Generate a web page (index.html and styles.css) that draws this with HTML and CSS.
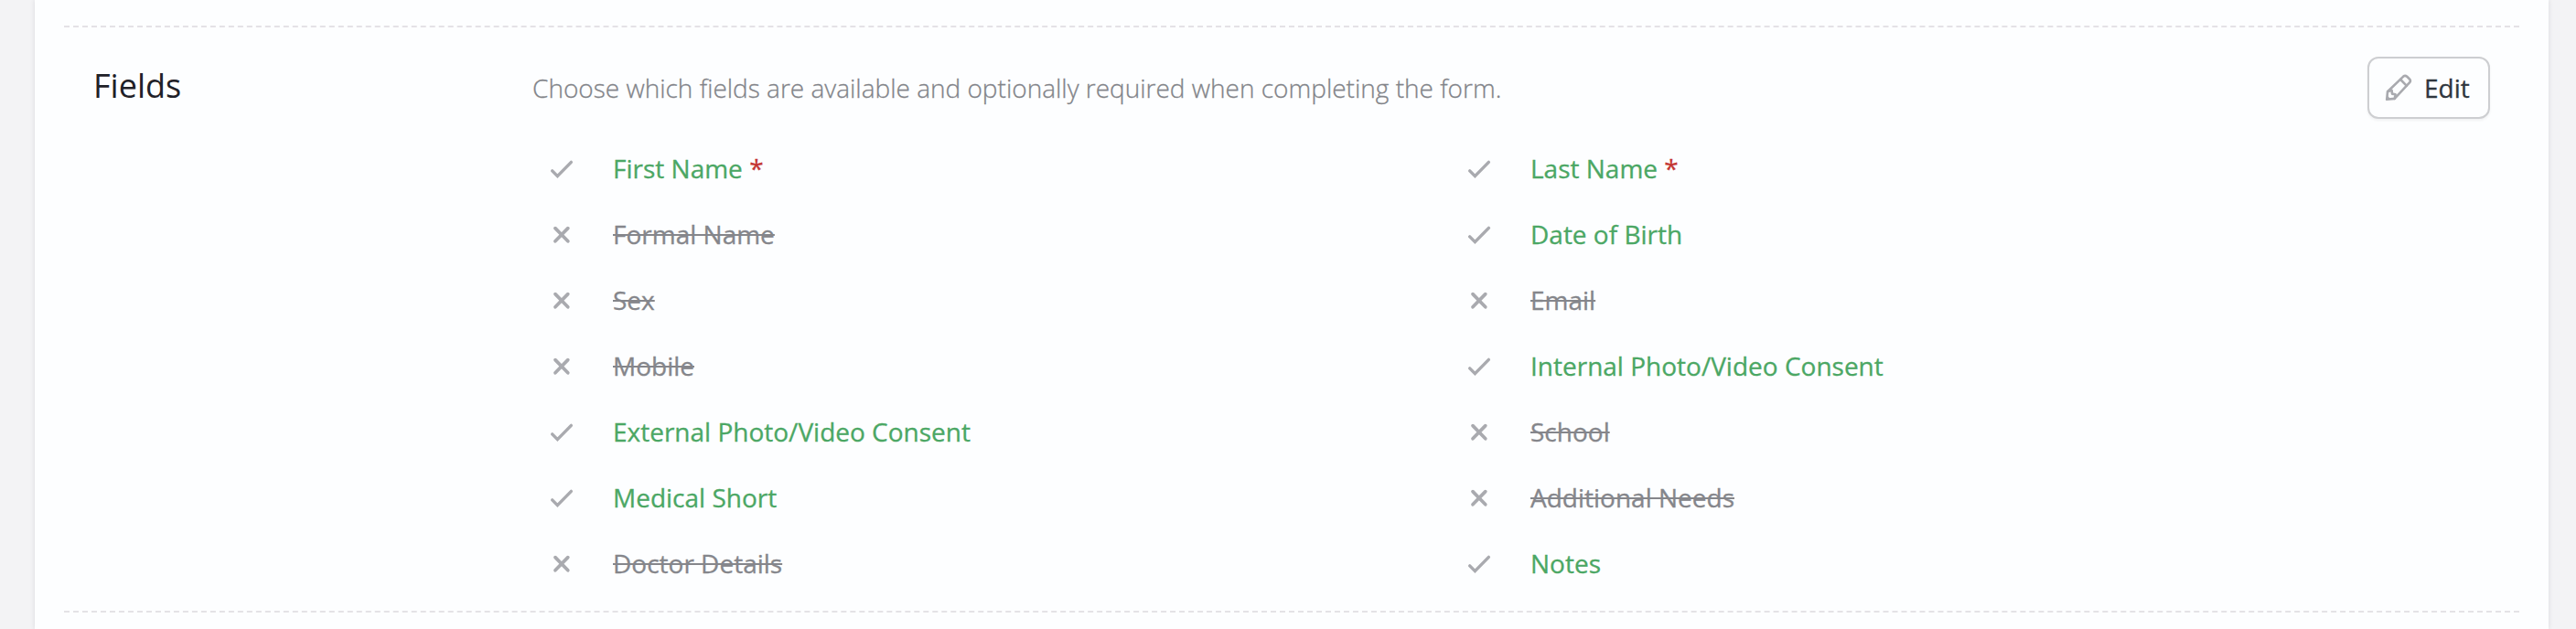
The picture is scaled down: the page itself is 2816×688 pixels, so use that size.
FILE: index.html
```html
<!DOCTYPE html>
<html lang="en">
<head>
<meta charset="utf-8">
<title>Fields</title>
<link rel="stylesheet" href="styles.css">
</head>
<body>
<svg class="sprite" aria-hidden="true">
  <symbol id="check" viewBox="0 0 28 24"><path d="M3.7 13.9 9.4 19.6 24.4 4.4" fill="none" stroke="currentColor" stroke-width="3.4" stroke-linecap="round" stroke-linejoin="miter"/></symbol>
  <symbol id="cross" viewBox="0 0 28 24"><path d="M7 4.6 20.8 18.8M20.8 4.6 7 18.8" fill="none" stroke="currentColor" stroke-width="3.7" stroke-linecap="round"/></symbol>
</svg>
<main class="card">
  <section class="section">
    <h2 class="title">Fields</h2>
    <div class="content">
      <p class="intro">Choose which fields are available and optionally required when completing the form.</p>
      <ul class="fields">
        <li class="field on"><svg class="mark"><use href="#check"/></svg><span>First Name <b class="req">*</b></span></li>
        <li class="field on"><svg class="mark"><use href="#check"/></svg><span>Last Name <b class="req">*</b></span></li>
        <li class="field off"><svg class="mark"><use href="#cross"/></svg><span>Formal Name</span></li>
        <li class="field on"><svg class="mark"><use href="#check"/></svg><span>Date of Birth</span></li>
        <li class="field off"><svg class="mark"><use href="#cross"/></svg><span>Sex</span></li>
        <li class="field off"><svg class="mark"><use href="#cross"/></svg><span>Email</span></li>
        <li class="field off"><svg class="mark"><use href="#cross"/></svg><span>Mobile</span></li>
        <li class="field on"><svg class="mark"><use href="#check"/></svg><span>Internal Photo/Video Consent</span></li>
        <li class="field on"><svg class="mark"><use href="#check"/></svg><span>External Photo/Video Consent</span></li>
        <li class="field off"><svg class="mark"><use href="#cross"/></svg><span>School</span></li>
        <li class="field on"><svg class="mark"><use href="#check"/></svg><span>Medical Short</span></li>
        <li class="field off"><svg class="mark"><use href="#cross"/></svg><span>Additional Needs</span></li>
        <li class="field off"><svg class="mark"><use href="#cross"/></svg><span>Doctor Details</span></li>
        <li class="field on"><svg class="mark"><use href="#check"/></svg><span>Notes</span></li>
      </ul>
    </div>
    <button class="edit" type="button">
      <svg class="pencil" viewBox="0 0 30 30"><g fill="none" stroke="currentColor" stroke-width="2.6" stroke-linejoin="round" stroke-linecap="round"><path d="M2.2 27.8 3 19.3 20.3 2.6Q22.2 1 24.3 2.8L26.8 5.2Q28.8 7.2 27.2 9.2L10.7 26.9Z"/><path d="M17.2 6 23.9 12.8M3.4 19.1 7.6 17.8 8 21.6 11.6 22.2 10.7 26.9"/></g><path d="M2.2 27.8 2.7 23.3 6.3 27.4Z" fill="currentColor"/></svg>
      <span>Edit</span>
    </button>
  </section>
</main>
</body>
</html>
```

FILE: styles.css
```css
* {
  box-sizing: border-box;
}

body {
  margin: 0;
  padding: 0 30px 0 38px;
  height: 688px;
  overflow: hidden;
  background: #f3f3f5;
  font-family: "Open Sans", sans-serif;
  font-size: 28px;
  line-height: 40px;
  color: #1f2128;
  -webkit-text-stroke: 0.3px currentColor;
}

.sprite {
  display: none;
}

.card {
  height: 688px;
  padding: 28px 32px 0;
  background: #fdfeff;
  box-shadow: 0 0 5px rgba(30, 30, 50, 0.12);
}

.section {
  display: flex;
  align-items: flex-start;
  height: 642px;
  padding: 32px 32px 0;
  border-top: 2px dashed #e4e2e6;
  border-bottom: 2px dashed #e4e2e6;
}

.title {
  width: 480px;
  margin: 6px 0 0;
  font-size: 36px;
  font-weight: 400;
  line-height: 52px;
  -webkit-text-stroke: 0;
}

.content {
  flex: 1;
}

.intro {
  margin: 14px 0 33px;
  font-weight: 300;
  color: #828489;
}

.fields {
  display: grid;
  grid-template-columns: repeat(2, 1fr);
  grid-auto-rows: 72px;
  margin: 0;
  padding: 0;
  list-style: none;
}

.field {
  display: flex;
  align-items: center;
  gap: 42px;
  padding-left: 18px;
}

.field span {
  padding-bottom: 2px;
}

.on {
  color: #4ba764;
}

.off {
  color: #85868b;
}

.off span {
  text-decoration: line-through;
  text-decoration-thickness: 2px;
}

.mark {
  width: 28px;
  height: 24px;
  overflow: visible;
  color: #a9aaaf;
}

.req {
  font-weight: 400;
  color: #c43532;
}

.edit {
  display: flex;
  align-items: center;
  gap: 13px;
  width: 134px;
  height: 68px;
  padding: 0 0 0 17px;
  border: 2px solid #cdced1;
  border-radius: 12px;
  background: #fdfeff;
  box-shadow: 0 2px 3px rgba(0, 0, 0, 0.05);
  font: inherit;
  color: #2f363e;
}

.pencil {
  width: 30px;
  height: 30px;
  color: #a9aaaf;
}
```
